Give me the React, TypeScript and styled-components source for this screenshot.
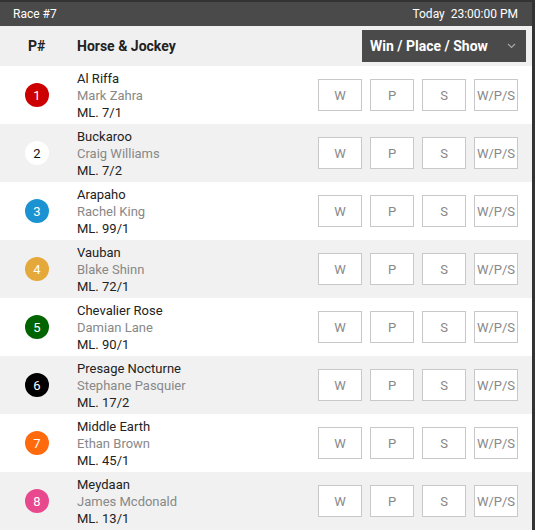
import styled, { createGlobalStyle } from 'styled-components'

const GlobalStyle = createGlobalStyle`
  html, body {
    margin: 0;
    padding: 0;
    background: #fff;
    font-family: Roboto, "Liberation Sans", sans-serif;
  }
`

type Runner = {
  num: number
  horse: string
  jockey: string
  ml: string
  color: string
  text: string
}

const runners: Runner[] = [
  { num: 1, horse: 'Al Riffa', jockey: 'Mark Zahra', ml: '7/1', color: '#cc0000', text: '#fff' },
  { num: 2, horse: 'Buckaroo', jockey: 'Craig Williams', ml: '7/2', color: '#ffffff', text: '#111' },
  { num: 3, horse: 'Arapaho', jockey: 'Rachel King', ml: '99/1', color: '#1b93d2', text: '#fff' },
  { num: 4, horse: 'Vauban', jockey: 'Blake Shinn', ml: '72/1', color: '#e5a83a', text: '#fff' },
  { num: 5, horse: 'Chevalier Rose', jockey: 'Damian Lane', ml: '90/1', color: '#006400', text: '#fff' },
  { num: 6, horse: 'Presage Nocturne', jockey: 'Stephane Pasquier', ml: '17/2', color: '#000000', text: '#fff' },
  { num: 7, horse: 'Middle Earth', jockey: 'Ethan Brown', ml: '45/1', color: '#ff6a0d', text: '#fff' },
  { num: 8, horse: 'Meydaan', jockey: 'James Mcdonald', ml: '13/1', color: '#e8488e', text: '#fff' },
]

const bets = ['W', 'P', 'S', 'W/P/S']

export default function App () {
  return (
    <>
      <GlobalStyle />
      <Panel>
        <RaceBar>
          <span>Race #7</span>
          <span>Today&nbsp;&nbsp;23:00:00 PM</span>
        </RaceBar>
        <ColumnHead>
          <PosHead>P#</PosHead>
          <HorseHead>Horse &amp; Jockey</HorseHead>
          <PoolSelect>
            <span>Win / Place / Show</span>
            <svg width="9" height="6" viewBox="0 0 9 6">
              <path d="M1 1 L4.5 4.5 L8 1" fill="none" stroke="#a8a8a8" strokeWidth="1.2" />
            </svg>
          </PoolSelect>
        </ColumnHead>
        {runners.map((r, i) => (
          <Row key={r.num} $alt={i % 2 === 1}>
            <PosCell>
              <Saddle $bg={r.color} $fg={r.text}>{r.num}</Saddle>
            </PosCell>
            <Info>
              <Horse>{r.horse}</Horse>
              <Jockey>{r.jockey}</Jockey>
              <Odds>ML. {r.ml}</Odds>
            </Info>
            <Bets>
              {bets.map(b => (
                <BetButton key={b}>{b}</BetButton>
              ))}
            </Bets>
          </Row>
        ))}
      </Panel>
    </>
  )
}

const Panel = styled.div`
  width: 532px;
  border-right: 3px solid #333;
  background: #fff;
`

const RaceBar = styled.div`
  display: flex;
  justify-content: space-between;
  align-items: center;
  height: 24px;
  border-top: 2px solid #333;
  padding: 0 14px 0 13px;
  background: #4a4a4a;
  color: #fff;
  font-size: 12px;
`

const ColumnHead = styled.div`
  display: flex;
  align-items: center;
  height: 40px;
  background: #f0f0f0;
  padding-right: 6px;
`

const PosHead = styled.div`
  width: 77px;
  padding-left: 28px;
  box-sizing: border-box;
  font-size: 14px;
  font-weight: 700;
  color: #222;
`

const HorseHead = styled.div`
  flex: 1;
  font-size: 14px;
  font-weight: 700;
  color: #222;
`

const PoolSelect = styled.div`
  display: flex;
  align-items: center;
  justify-content: space-between;
  width: 164px;
  height: 32px;
  box-sizing: border-box;
  padding: 0 10px 0 8px;
  background: #4a4a4a;
  color: #fff;
  font-size: 14px;
  font-weight: 700;
`

const Row = styled.div<{ $alt: boolean }>`
  display: flex;
  align-items: center;
  height: 58px;
  background: ${p => (p.$alt ? '#f1f1f1' : '#fff')};
  padding-right: 14px;
`

const PosCell = styled.div`
  width: 77px;
  display: flex;
  padding-left: 25px;
  box-sizing: border-box;
`

const Saddle = styled.div<{ $bg: string; $fg: string }>`
  width: 24px;
  height: 24px;
  border-radius: 50%;
  display: flex;
  align-items: center;
  justify-content: center;
  background: ${p => p.$bg};
  color: ${p => p.$fg};
  font-size: 13px;
`

const Info = styled.div`
  flex: 1;
  display: flex;
  flex-direction: column;
  font-size: 13px;
  line-height: 17px;
`

const Horse = styled.div`
  color: #222;
`

const Jockey = styled.div`
  color: #888;
`

const Odds = styled.div`
  color: #222;
`

const Bets = styled.div`
  display: flex;
  gap: 8px;
`

const BetButton = styled.div`
  width: 44px;
  height: 32px;
  box-sizing: border-box;
  border: 1px solid #c8c8c8;
  background: #fff;
  display: flex;
  align-items: center;
  justify-content: center;
  color: #888;
  font-size: 13px;
`
